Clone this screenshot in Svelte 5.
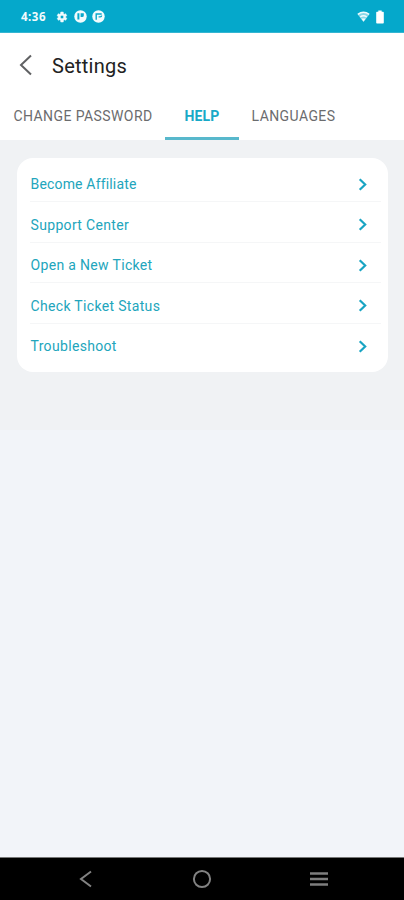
<script>
  const tabs = ['CHANGE PASSWORD', 'HELP', 'LANGUAGES'];
  const items = [
    'Become Affiliate',
    'Support Center',
    'Open a New Ticket',
    'Check Ticket Status',
    'Troubleshoot'
  ];
  let active = $state(1);
</script>

<div class="screen">
  <div class="status">
    <span class="time">4:36</span>
    <svg class="gear" width="12" height="12" viewBox="0 0 24 24">
      <path fill="#f2fbfd" stroke="#f2fbfd" stroke-width="1" fill-rule="evenodd" d="M19.4 13a7.6 7.6 0 0 0 0-2l2.2-1.7-2.2-4-2.7 1.1-1.8-1L14.500 2h-5l-.5 3.400-1.800 1-2.700-1.100-2.200 4L4.600 11a7.600 7.600 0 0 0 0 2l-2.200 1.700 2.200 4 2.700-1.100 1.800 1 .4 3.400h5l.5-3.400 1.800-1 2.700 1.100 2.200-4zM12 15.500a3.500 3.500 0 1 1 0-7 3.500 3.500 0 0 1 0 7z" />
    </svg>
    <svg class="badge first" width="13" height="13" viewBox="0 0 13 13">
      <circle cx="6.500" cy="6.500" r="6.200" fill="#f2fbfd" />
      <path d="M3.400 3.300h2v6.200h-2zM6.600 3.300h3.200v2.200q0 1.500-1.500 1.500H6.600z" fill="#08a8ca" />
    </svg>
    <svg class="badge" width="13" height="13" viewBox="0 0 13 13">
      <circle cx="6.500" cy="6.500" r="6.200" fill="#f2fbfd" />
      <path d="M4.200 9.700V4h5.500M6.600 6.900h1.600q1.400 0 1.400-1.400" fill="none" stroke="#08a8ca" stroke-width="1.400" />
    </svg>
    <svg class="wifi" width="13" height="12" viewBox="0 0 13 12">
      <path d="M.7 3.400Q6.500-1 12.300 3.400L6.500 11z" fill="#8bd8e8" />
      <path d="M.8 3.400Q6.500-.8 12.200 3.400M3.300 5.800Q6.500 3.600 9.700 5.800" fill="none" stroke="#effbfd" stroke-width="1.400" />
      <path d="M4.300 7.500h4.400L6.500 10.600z" fill="#effbfd" />
    </svg>
    <svg class="battery" width="8" height="14" viewBox="0 0 8 14">
      <path d="M2.300 0.500h3.400v1.200H7q.8 0 .8.800v10.200q0 .8-.8.800H1q-.8 0-.8-.8V2.500q0-.8.800-.8h1.300z" fill="#fff" />
    </svg>
  </div>

  <header>
    <svg class="back" width="14" height="22" viewBox="0 0 14 22">
      <path d="M12 1.500 2 11l10 9.500" fill="none" stroke="#606163" stroke-width="2" />
    </svg>
    <h1>Settings</h1>
  </header>

  <nav class="tabs">
    {#each tabs as tab, i}
      <button class:active={active === i} onclick={() => (active = i)}><span>{tab}</span></button>
    {/each}
  </nav>

  <main>
    <ul>
      {#each items as item}
        <li>
          <span>{item}</span>
          <svg width="10" height="13" viewBox="0 0 10 13">
            <path d="M1.700 1.200 7.200 6.500 1.700 11.800" fill="none" stroke="#18a4c3" stroke-width="2.200" />
          </svg>
        </li>
      {/each}
    </ul>
  </main>

  <div class="rest"></div>

  <footer>
    <svg class="nav-back" width="14" height="18" viewBox="0 0 14 18">
      <path d="M12 1.500 2 9l10 7.500" fill="none" stroke="#828282" stroke-width="2" />
    </svg>
    <svg class="home" width="20" height="20" viewBox="0 0 20 20">
      <circle cx="10" cy="10" r="8.100" fill="none" stroke="#828282" stroke-width="2" />
    </svg>
    <svg class="menu" width="18" height="16" viewBox="0 0 18 16">
      <path d="M0 2.500h18M0 8h18M0 13.500h18" stroke="#7e7e7e" stroke-width="2.600" />
    </svg>
  </footer>
</div>

<style>
  .screen {
    width: 404px;
    height: 900px;
    display: flex;
    flex-direction: column;
    overflow: hidden;
    background: #f2f4f9;
    font-family: Roboto, sans-serif;
  }
  .status {
    height: 33px;
    flex: none;
    box-sizing: border-box;
    padding: 1px 0 0 21px;
    display: flex;
    align-items: center;
    background: #05a8cb;
    border-bottom: 1px solid #34b5d1;
  }
  .time {
    width: 35px;
    color: #f2fbfd;
    font: 700 11.500px "Noto Sans", sans-serif;
    letter-spacing: 0.5px;
  }
  .first { margin: 0 5px 0 6px; }
  .wifi { margin-left: auto; margin-right: 6px; }
  .battery { margin-right: 20px; }
  header {
    height: 63px;
    flex: none;
    display: flex;
    align-items: center;
    background: #fff;
    padding-left: 19px;
  }
  h1 {
    margin: 3px 0 0 19px;
    font-size: 20px;
    line-height: 24px;
    font-weight: 400;
    letter-spacing: 0.25px;
    color: #222;
  }
  .tabs {
    height: 44px;
    flex: none;
    display: flex;
    background: #fff;
  }
  button {
    box-sizing: border-box;
    padding: 0 0 1px;
    border: 0;
    border-bottom: 3px solid transparent;
    background: none;
    font: 400 14px/20px Roboto, sans-serif;
    letter-spacing: 0.42px;
    color: #6b6c6e;
    white-space: nowrap;
  }
  button:nth-child(1) { width: 166px; margin-right: -1px; }
  button:nth-child(2) { width: 74px; letter-spacing: 0.2px; }
  button:nth-child(3) { width: 109px; }
  button.active {
    font-weight: 700;
    color: #18a9c7;
    border-bottom-color: #58b8cc;
  }
  main {
    height: 290px;
    flex: none;
    box-sizing: border-box;
    padding: 17.500px 16px 0 17px;
    background: #f0f2f4;
  }
  ul {
    height: 214.500px;
    box-sizing: border-box;
    margin: 0;
    padding: 4px 7px 0 13px;
    list-style: none;
    background: #fff;
    border-radius: 16px;
  }
  li {
    height: 40.600px;
    box-sizing: border-box;
    display: flex;
    align-items: center;
    justify-content: space-between;
    padding: 5.500px 13px 0 0.500px;
    border-bottom: 1px solid #f5f6f7;
    font-size: 14px;
    line-height: 20px;
    letter-spacing: 0.33px;
    color: #22a5bc;
  }
  li:first-child { letter-spacing: 0.17px; }
  li:last-child { border-bottom-color: transparent; }
  .rest { flex: 1; }
  footer {
    height: 43px;
    flex: none;
    box-sizing: border-box;
    border-top: 1px solid #777;
    background: #000;
    display: flex;
    align-items: center;
    padding: 0 76px 0 79px;
    justify-content: space-between;
  }
</style>
